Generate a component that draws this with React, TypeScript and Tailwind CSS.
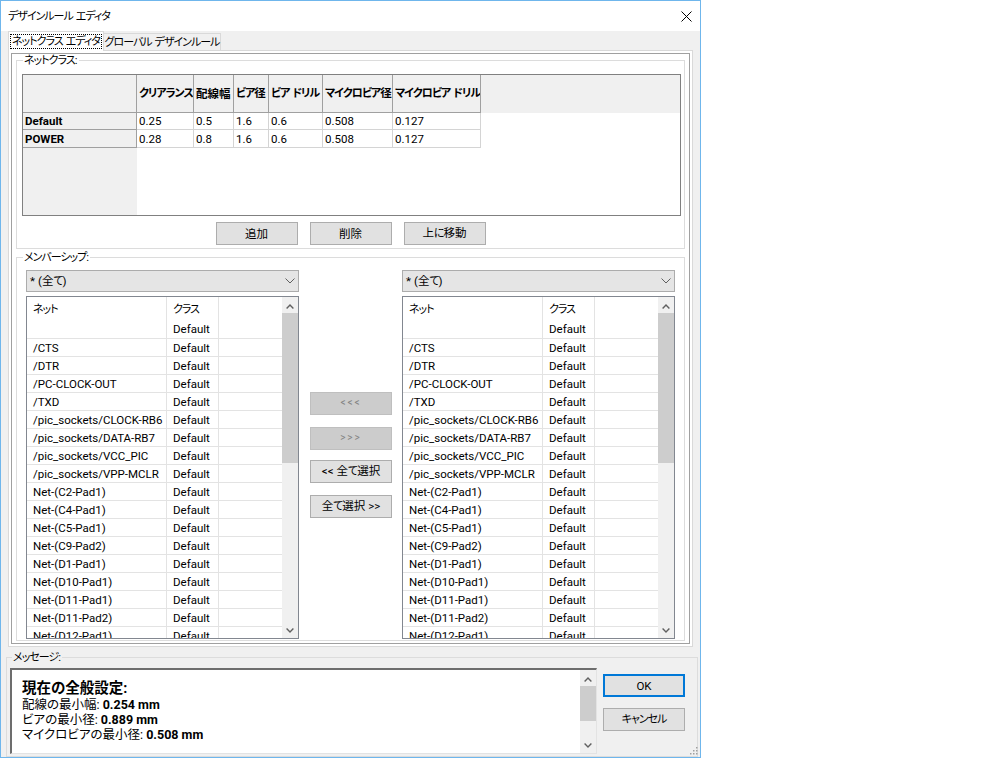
import React from "react";

const netClassCols: [string, string][] = [
  ["クリアランス", "w-[57px]"],
  ["配線幅", "w-[40px]"],
  ["ビア径", "w-[35px]"],
  ["ビア ドリル", "w-[54px]"],
  ["マイクロビア径", "w-[70px]"],
  ["マイクロビア ドリル", "w-[88px]"],
];

const netClasses: { name: string; h: string; values: string[] }[] = [
  { name: "Default", h: "h-[17px]", values: ["0.25", "0.5", "1.6", "0.6", "0.508", "0.127"] },
  { name: "POWER", h: "h-[18px]", values: ["0.28", "0.8", "1.6", "0.6", "0.508", "0.127"] },
];

const nets = [
  "/CTS",
  "/DTR",
  "/PC-CLOCK-OUT",
  "/TXD",
  "/pic_sockets/CLOCK-RB6",
  "/pic_sockets/DATA-RB7",
  "/pic_sockets/VCC_PIC",
  "/pic_sockets/VPP-MCLR",
  "Net-(C2-Pad1)",
  "Net-(C4-Pad1)",
  "Net-(C5-Pad1)",
  "Net-(C9-Pad2)",
  "Net-(D1-Pad1)",
  "Net-(D10-Pad1)",
  "Net-(D11-Pad1)",
  "Net-(D11-Pad2)",
  "Net-(D12-Pad1)",
];

// The original UI font has narrow kana and full-width kanji:
// kana runs get squeezed, kanji and latin stay as they are.
function J({ text, className = "" }: { text: string; className?: string }) {
  const parts = text.match(/[\u3040-\u30ff]+|[\u4e00-\u9fff]+| |[^\u3040-\u30ff\u4e00-\u9fff ]+/g) || [];
  return (
    <span className={"whitespace-nowrap " + className}>
      {parts.map((p, i) => {
        if (p === " ") return <span key={i} className="inline-block w-[3px]" />;
        if (/[\u3040-\u30ff]/.test(p))
          return (
            <span key={i} className="text-[11px] tracking-[-1px]">
              {p}
            </span>
          );
        return <span key={i}>{p}</span>;
      })}
    </span>
  );
}

function Chevron({ up }: { up?: boolean }) {
  return (
    <svg width="8" height="5" viewBox="0 0 8 5">
      <polyline
        points={up ? "0.6,4.4 4,1 7.4,4.4" : "0.6,0.6 4,4 7.4,0.6"}
        fill="none"
        stroke="#606060"
        strokeWidth="1.4"
      />
    </svg>
  );
}

function Scrollbar({ thumb }: { thumb: string }) {
  return (
    <div className="w-[16px] h-full shrink-0 bg-[#f0f0f0] flex flex-col">
      <div className="h-[16px] shrink-0 flex items-center justify-center pt-[3px]">
        <Chevron up />
      </div>
      <div className="flex-1">
        <div className={thumb + " bg-[#cdcdcd]"} />
      </div>
      <div className="h-[16px] shrink-0 flex items-center justify-center">
        <Chevron />
      </div>
    </div>
  );
}

function Button({ label, disabled, isDefault }: { label: string; disabled?: boolean; isDefault?: boolean }) {
  return (
    <div
      className={
        "w-[82px] h-[23px] flex items-center justify-center shrink-0 " +
        (disabled
          ? "bg-[#cccccc] border border-[#bfbfbf] text-[#838383] tracking-[2px] text-[10px]"
          : isDefault
          ? "bg-[#e1e1e1] border-2 border-[#0078d7]"
          : "bg-[#e1e1e1] border border-[#adadad]")
      }
    >
      {disabled || isDefault ? label : <J text={label} />}
    </div>
  );
}

function Combo() {
  return (
    <div className="w-[273px] h-[22px] bg-[#e5e5e5] border border-[#acacac] flex items-center justify-between pl-[3px] pr-[3px]">
      <J text="* (全て)" />
      <svg width="10" height="6" viewBox="0 0 10 6">
        <polyline points="0.5,0.5 5,5 9.5,0.5" fill="none" stroke="#606060" strokeWidth="1" />
      </svg>
    </div>
  );
}

function NetList() {
  return (
    <div className="w-[273px] h-[343px] border border-[#828790] bg-white flex overflow-hidden">
      <div className="flex-1 overflow-hidden">
        <div className="flex h-[22px]">
          <div className="w-[140px] border-r border-[#e3e3e3] pl-[6px] pt-[2px] flex items-center">
            <J text="ネット" />
          </div>
          <div className="w-[52px] border-r border-[#e3e3e3] pl-[6px] pt-[2px] flex items-center">
            <J text="クラス" />
          </div>
          <div className="flex-1" />
        </div>
        <div className="flex h-[20px] border-b border-[#e3e3e3]">
          <div className="w-[140px] border-r border-[#e3e3e3]" />
          <div className="w-[52px] border-r border-[#e3e3e3] pl-[6px] flex items-center">Default</div>
          <div className="flex-1" />
        </div>
        {nets.map((n) => (
          <div key={n} className="flex h-[18px] border-b border-[#e3e3e3]">
            <div className="w-[140px] border-r border-[#e3e3e3] pl-[6px] flex items-center whitespace-nowrap overflow-hidden">
              {n}
            </div>
            <div className="w-[52px] border-r border-[#e3e3e3] pl-[6px] flex items-center">Default</div>
            <div className="flex-1" />
          </div>
        ))}
      </div>
      <Scrollbar thumb="h-[150px]" />
    </div>
  );
}

function NetClassGrid() {
  return (
    <div className="w-[659px] h-[142px] border border-[#808080] bg-white flex flex-col overflow-hidden mt-[7px] ml-[5px]">
      <div className="flex h-[38px] shrink-0 bg-[#f0f0f0]">
        <div className="w-[114px] border-r border-b border-[#a0a0a0]" />
        {netClassCols.map(([label, w]) => (
          <div
            key={label}
            className={w + " border-r border-b border-[#a0a0a0] flex items-center pl-[2px] font-bold overflow-hidden"}
          >
            <J text={label} />
          </div>
        ))}
        <div className="flex-1" />
      </div>
      {netClasses.map((c) => (
        <div key={c.name} className={"flex shrink-0 " + c.h}>
          <div className="w-[114px] bg-[#f0f0f0] border-r border-b border-[#a0a0a0] flex items-center pl-[2px] font-bold">
            {c.name}
          </div>
          {c.values.map((v, i) => (
            <div key={i} className={netClassCols[i][1] + " border-r border-b border-[#d4d4d4] flex items-center pl-[2px]"}>
              {v}
            </div>
          ))}
          <div className="flex-1" />
        </div>
      ))}
      <div className="flex-1 flex">
        <div className="w-[114px] bg-[#f0f0f0]" />
      </div>
    </div>
  );
}

export default function App() {
  return (
    <div className="w-[1000px] h-[759px] bg-white font-['Roboto','Noto_Sans_CJK_JP',sans-serif] [font-feature-settings:'palt'] text-[11.5px] leading-[14px] text-black">
      <div className="relative w-[701px] h-[758px] border border-[#6fb6ec] bg-[#f0f0f0] flex flex-col">
        {/* title bar */}
        <div className="h-[30px] shrink-0 bg-white flex items-center justify-between pl-[7px] pr-[8px]">
          <J text="デザインルール エディタ" />
          <svg width="11" height="11" viewBox="0 0 11 11">
            <line x1="0.5" y1="0.5" x2="10.5" y2="10.5" stroke="#000" strokeWidth="1" />
            <line x1="10.5" y1="0.5" x2="0.5" y2="10.5" stroke="#000" strokeWidth="1" />
          </svg>
        </div>

        {/* tabs */}
        <div className="h-[19px] shrink-0 flex items-end pl-[7px]">
          <div className="relative z-10 w-[96px] h-[20px] -mb-px bg-white border-x border-t border-[#d9d9d9] flex items-center justify-center">
            <div className="border border-dotted border-black px-[1px] leading-[13px]">
              <J text="ネットクラス エディタ" />
            </div>
          </div>
          <div className="w-[117px] h-[17px] bg-[#f0f0f0] border-r border-t border-[#d9d9d9] flex items-center justify-center">
            <J text="グローバル デザインルール" />
          </div>
        </div>

        {/* tab panel */}
        <div className="ml-[7px] w-[685px] h-[597px] shrink-0 border border-[#d9d9d9] bg-white p-[2px]">
          <div className="h-full border border-[#a0a0a0] bg-white px-[4px] overflow-hidden">
            <fieldset className="border border-[#dcdcdc] pb-[3px]">
              <legend className="ml-[6px] px-[1px] leading-[13px]">
                <J text="ネットクラス:" />
              </legend>
              <NetClassGrid />
              <div className="flex justify-center gap-[12px] mt-[6px]">
                <Button label="追加" />
                <Button label="削除" />
                <Button label="上に移動" />
              </div>
            </fieldset>

            <fieldset className="border border-[#dcdcdc] mt-[2px] pb-[1px]">
              <legend className="ml-[6px] px-[1px] leading-[13px]">
                <J text="メンバーシップ:" />
              </legend>
              <div className="flex pl-[9px] mt-[6px]">
                <div className="flex flex-col">
                  <Combo />
                  <div className="mt-[4px]">
                    <NetList />
                  </div>
                </div>
                <div className="ml-[11px] w-[82px] flex flex-col justify-center">
                  <Button label="<<<" disabled />
                  <div className="mt-[12px]">
                    <Button label=">>>" disabled />
                  </div>
                  <div className="mt-[10px]">
                    <Button label="<< 全て選択" />
                  </div>
                  <div className="mt-[12px]">
                    <Button label="全て選択 >>" />
                  </div>
                </div>
                <div className="ml-[10px] flex flex-col">
                  <Combo />
                  <div className="mt-[4px]">
                    <NetList />
                  </div>
                </div>
              </div>
            </fieldset>
          </div>
        </div>

        {/* messages */}
        <fieldset className="ml-[5px] mt-[4px] w-[692px] border border-[#dcdcdc] pl-[3px] pb-[2px]">
          <legend className="ml-[2px] px-[1px] leading-[13px]">
            <J text="メッセージ:" />
          </legend>
          <div className="flex mt-[4px]">
            <div className="w-[587px] h-[86px] bg-white border-t-2 border-l-2 border-r border-b border-t-[#6d6d6d] border-l-[#6d6d6d] border-r-[#e3e3e3] border-b-[#e3e3e3] flex">
              <div className="flex-1 pl-[10px] pt-[10px] text-[12.5px] leading-[15px]">
                <div className="text-[14.5px] leading-[17px] font-bold">現在の全般設定:</div>
                <div>
                  配線の最小幅: <b>0.254 mm</b>
                </div>
                <div>
                  ビアの最小径: <b>0.889 mm</b>
                </div>
                <div>
                  マイクロビアの最小径: <b>0.508 mm</b>
                </div>
              </div>
              <Scrollbar thumb="h-[35px]" />
            </div>
            <div className="ml-[6px] flex flex-col">
              <div className="mt-[6px]">
                <Button label="OK" isDefault />
              </div>
              <div className="mt-[11px]">
                <Button label="キャンセル" />
              </div>
            </div>
          </div>
        </fieldset>

        {/* resize grip */}
        <svg className="absolute right-[2px] bottom-[2px]" width="8" height="8" viewBox="0 0 8 8">
          <rect x="6" y="0" width="1.5" height="1.5" fill="#a0a0a0" />
          <rect x="3" y="3" width="1.5" height="1.5" fill="#a0a0a0" />
          <rect x="6" y="3" width="1.5" height="1.5" fill="#a0a0a0" />
          <rect x="0" y="6" width="1.5" height="1.5" fill="#a0a0a0" />
          <rect x="3" y="6" width="1.5" height="1.5" fill="#a0a0a0" />
          <rect x="6" y="6" width="1.5" height="1.5" fill="#a0a0a0" />
        </svg>
      </div>
    </div>
  );
}
